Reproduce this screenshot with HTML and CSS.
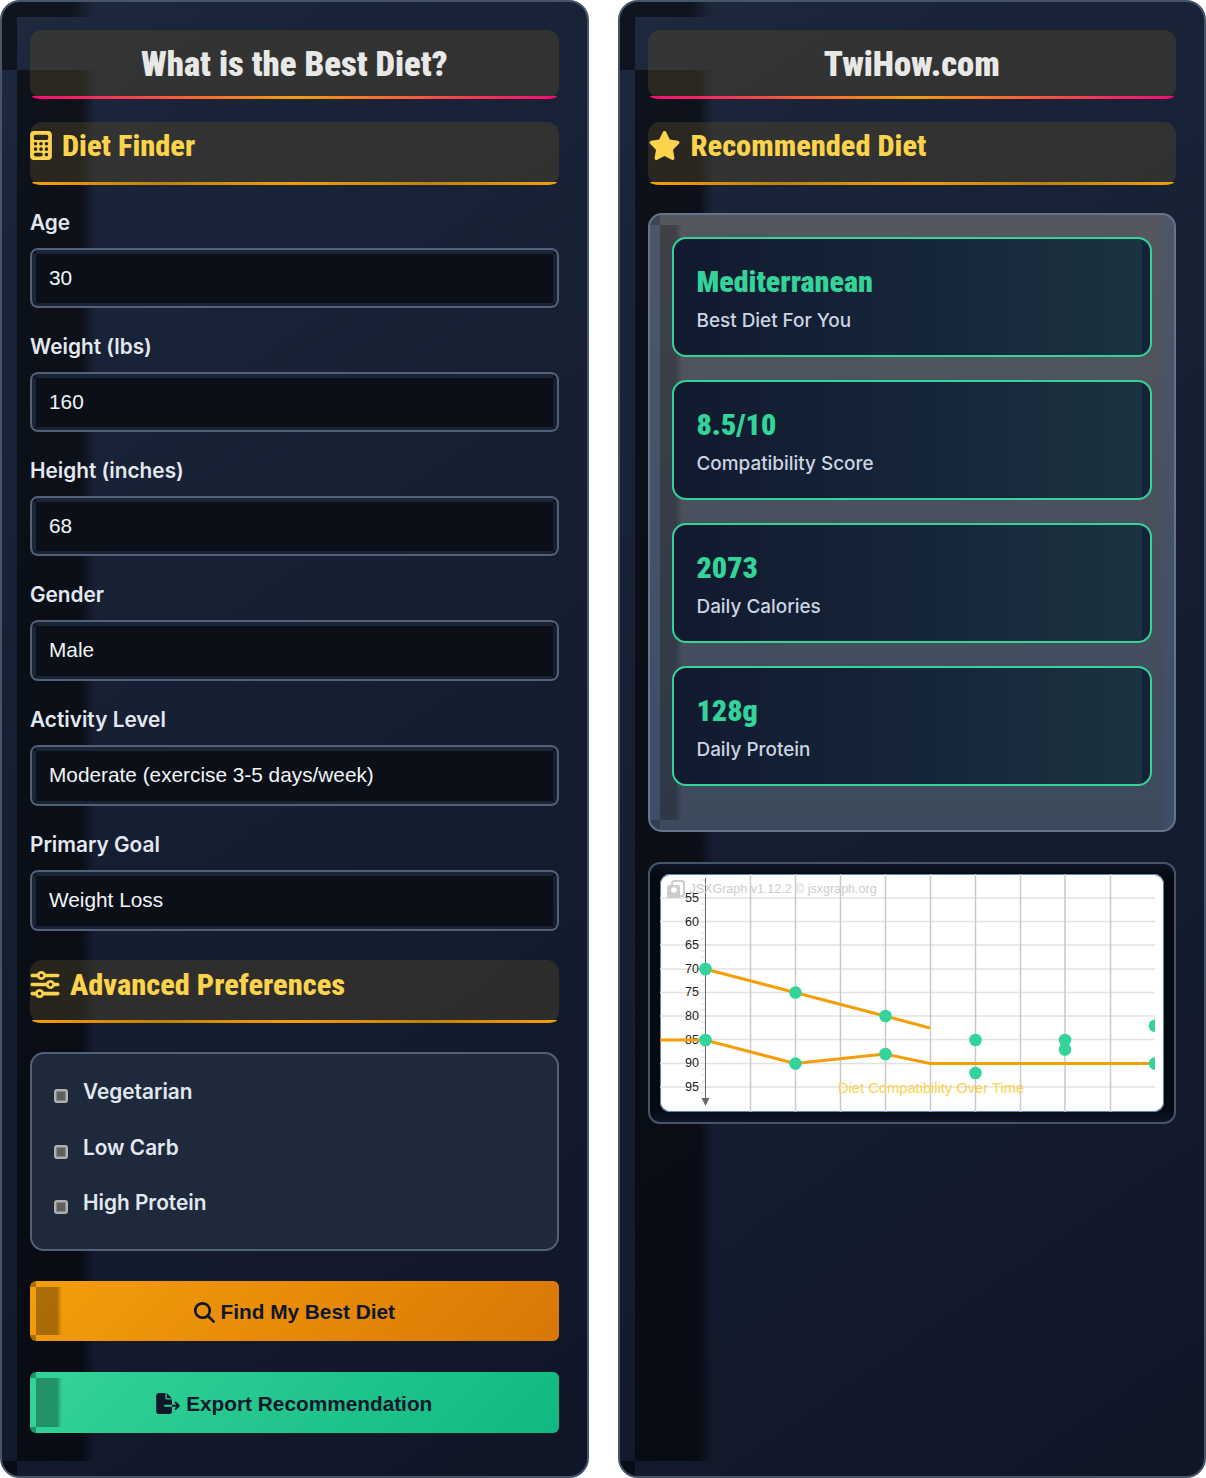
FILE: index.html
```html
<!DOCTYPE html>
<html lang="en">
<head>
<meta charset="utf-8">
<title>What is the Best Diet?</title>
<link rel="stylesheet" href="styles.css">
</head>
<body>
<main class="layout">
  <section class="panel">
    <h1 class="title">What is the Best Diet?</h1>
    <h2 class="head">
      <svg class="ico ico-calc" viewBox="0 0 384 512"><path d="M64 0C28.7 0 0 28.7 0 64V448c0 35.3 28.7 64 64 64H320c35.3 0 64-28.7 64-64V64c0-35.3-28.7-64-64-64H64zM96 64H288c17.7 0 32 14.3 32 32v32c0 17.7-14.3 32-32 32H96c-17.7 0-32-14.3-32-32V96c0-17.7 14.3-32 32-32zm32 160a32 32 0 1 1 -64 0 32 32 0 1 1 64 0zM96 352a32 32 0 1 1 0-64 32 32 0 1 1 0 64zM64 416c0-17.7 14.3-32 32-32h96c17.7 0 32 14.3 32 32s-14.3 32-32 32H96c-17.7 0-32-14.3-32-32zM192 256a32 32 0 1 1 0-64 32 32 0 1 1 0 64zm32 64a32 32 0 1 1 -64 0 32 32 0 1 1 64 0zm64-64a32 32 0 1 1 0-64 32 32 0 1 1 0 64zm32 64a32 32 0 1 1 -64 0 32 32 0 1 1 64 0zM288 448a32 32 0 1 1 0-64 32 32 0 1 1 0 64z"/></svg>
      <span>Diet Finder</span>
    </h2>
    <div class="field"><label class="label" for="age">Age</label><input class="control" id="age" value="30"></div>
    <div class="field"><label class="label" for="weight">Weight (lbs)</label><input class="control" id="weight" value="160"></div>
    <div class="field"><label class="label" for="height">Height (inches)</label><input class="control" id="height" value="68"></div>
    <div class="field"><label class="label" for="gender">Gender</label><select class="control control-select" id="gender"><option>Male</option></select></div>
    <div class="field"><label class="label" for="activity">Activity Level</label><select class="control control-select" id="activity"><option>Moderate (exercise 3-5 days/week)</option></select></div>
    <div class="field field-last"><label class="label" for="goal">Primary Goal</label><select class="control control-select" id="goal"><option>Weight Loss</option></select></div>
    <h2 class="head head-adv">
      <svg class="ico ico-sliders" viewBox="0 0 512 512"><path d="M0 416c0 17.7 14.3 32 32 32l54.7 0c12.3 28.3 40.5 48 73.3 48s61-19.7 73.3-48L480 448c17.7 0 32-14.3 32-32s-14.3-32-32-32l-246.7 0c-12.3-28.3-40.5-48-73.3-48s-61 19.7-73.3 48L32 384c-17.7 0-32 14.3-32 32zm128 0a32 32 0 1 1 64 0 32 32 0 1 1 -64 0zM320 256a32 32 0 1 1 64 0 32 32 0 1 1 -64 0zm32-80c-32.8 0-61 19.7-73.3 48L32 224c-17.7 0-32 14.3-32 32s14.3 32 32 32l246.7 0c12.3 28.3 40.5 48 73.3 48s61-19.7 73.3-48l54.7 0c17.7 0 32-14.3 32-32s-14.3-32-32-32l-54.7 0c-12.3-28.3-40.5-48-73.3-48zM192 128a32 32 0 1 1 0-64 32 32 0 1 1 0 64zm73.3-64C253 35.7 224.8 16 192 16s-61 19.7-73.3 48L32 64C14.3 64 0 78.3 0 96s14.3 32 32 32l86.7 0c12.3 28.3 40.5 48 73.3 48s61-19.7 73.3-48L480 128c17.7 0 32-14.3 32-32s-14.3-32-32-32L265.3 64z"/></svg>
      <span>Advanced Preferences</span>
    </h2>
    <div class="prefs">
      <label class="pref"><input type="checkbox" class="check"><span>Vegetarian</span></label>
      <label class="pref"><input type="checkbox" class="check"><span>Low Carb</span></label>
      <label class="pref"><input type="checkbox" class="check"><span>High Protein</span></label>
    </div>
    <button class="btn btn-find" type="button">
      <svg class="btn-ico btn-ico-search" viewBox="0 0 512 512"><path d="M416 208c0 45.9-14.9 88.3-40 122.7L502.6 457.4c12.5 12.5 12.5 32.8 0 45.3s-32.8 12.5-45.3 0L330.7 376c-34.4 25.2-76.8 40-122.7 40C93.1 416 0 322.9 0 208S93.1 0 208 0S416 93.1 416 208zM208 352a144 144 0 1 0 0-288 144 144 0 1 0 0 288z"/></svg>
      Find My Best Diet
    </button>
    <button class="btn btn-export" type="button">
      <svg class="btn-ico btn-ico-export" viewBox="0 0 576 512"><path d="M0 64C0 28.7 28.7 0 64 0H224V128c0 17.7 14.3 32 32 32H384V288H216c-13.3 0-24 10.7-24 24s10.7 24 24 24H384V448c0 35.3-28.7 64-64 64H64c-35.3 0-64-28.7-64-64V64zM384 336V288H494.1l-39-39c-9.4-9.4-9.4-24.6 0-33.9s24.6-9.4 33.9 0l80 80c9.4 9.4 9.4 24.6 0 33.9l-80 80c-9.4 9.4-24.6 9.4-33.9 0s-9.4-24.6 0-33.9l39-39H384zm0-208H256V0L384 128z"/></svg>
      Export Recommendation
    </button>
  </section>

  <section class="panel">
    <h1 class="title">TwiHow.com</h1>
    <h2 class="head head-rec">
      <svg class="ico ico-star" viewBox="0 0 576 512"><path d="M316.9 18C311.6 7 300.4 0 288.1 0s-23.4 7-28.8 18L195 150.3 51.4 171.5c-12 1.8-22 10.2-25.7 21.7s-.7 24.2 7.9 32.7L137.8 329 113.2 474.7c-2 12 3 24.2 12.9 31.3s23 8 33.8 2.3l128.3-68.5 128.3 68.5c10.8 5.7 23.9 4.9 33.8-2.3s14.9-19.3 12.9-31.3L438.5 329 542.7 225.9c8.6-8.5 11.7-21.2 7.9-32.7s-13.7-19.9-25.7-21.7L381.2 150.3 316.9 18z"/></svg>
      <span>Recommended Diet</span>
    </h2>
    <div class="metrics">
      <div class="metric"><div class="metric-value">Mediterranean</div><div class="metric-label">Best Diet For You</div></div>
      <div class="metric"><div class="metric-value">8.5/10</div><div class="metric-label">Compatibility Score</div></div>
      <div class="metric"><div class="metric-value">2073</div><div class="metric-label">Daily Calories</div></div>
      <div class="metric"><div class="metric-value">128g</div><div class="metric-label">Daily Protein</div></div>
    </div>
    <div class="chart-wrap">
      <div class="chart">
        <svg class="chart-svg" viewBox="0 0 504 238" width="504" height="238">
          <g class="grid-h">
            <line x1="0" x2="495" y1="24" y2="24"/><line x1="0" x2="495" y1="47.5" y2="47.5"/><line x1="0" x2="495" y1="71" y2="71"/><line x1="0" x2="495" y1="95" y2="95"/><line x1="0" x2="495" y1="118.5" y2="118.5"/><line x1="0" x2="495" y1="142" y2="142"/><line x1="0" x2="495" y1="165.5" y2="165.5"/><line x1="0" x2="495" y1="189.5" y2="189.5"/><line x1="0" x2="495" y1="213" y2="213"/>
          </g>
          <g class="grid-v">
            <line x1="90.5" x2="90.5" y1="0" y2="238"/><line x1="135.5" x2="135.5" y1="0" y2="238"/><line x1="180.5" x2="180.5" y1="0" y2="238"/><line x1="225.5" x2="225.5" y1="0" y2="238"/><line x1="270.5" x2="270.5" y1="0" y2="238"/><line x1="315.5" x2="315.5" y1="0" y2="238"/><line x1="360.5" x2="360.5" y1="0" y2="238"/><line x1="405" x2="405" y1="0" y2="238"/><line x1="450.5" x2="450.5" y1="0" y2="238"/>
          </g>
          <path class="ticks" d="M41 6h4M41 12h4M41 18h4M41 30h4M41 36h4M41 41h4M41 53h4M41 59h4M41 65h4M41 77h4M41 83h4M41 89h4M41 101h4M41 107h4M41 112h4M41 124h4M41 130h4M41 136h4M41 148h4M41 154h4M41 160h4M41 172h4M41 177h4M41 183h4M41 195h4M41 201h4M41 207h4M41 219h4"/>
          <line class="axis" x1="45.5" x2="45.5" y1="4" y2="226"/>
          <path class="arrow" d="M41.5 224h8l-4 8z"/>
          <g class="brand">
            <rect class="brand-back" x="12" y="7" width="12" height="15" rx="2.5"/>
            <rect class="brand-front" x="7" y="11" width="13" height="13" rx="2"/>
            <circle class="brand-hole" cx="14" cy="16" r="2.8"/>
          </g>
          <text class="brand-text" x="29.500" y="19">JSXGraph v1.12.2 © jsxgraph.org</text>
          <g class="tick-labels">
            <text x="25" y="28">55</text><text x="25" y="52">60</text><text x="25" y="75">65</text><text x="25" y="99">70</text><text x="25" y="122">75</text><text x="25" y="146">80</text><text x="25" y="170">85</text><text x="25" y="193">90</text><text x="25" y="217">95</text>
          </g>
          <path class="series" d="M45 95L135 118.5L225 142L270 154"/>
          <path class="series" d="M0 166H45L135 189.5L225 180L270 189.5H495"/>
          <text class="chart-title" x="178" y="219">Diet Compatibility Over Time</text>
          <g class="dots">
            <circle cx="45.5" cy="95" r="6.3"/><circle cx="135.5" cy="118.5" r="6.3"/><circle cx="225.5" cy="142" r="6.3"/><circle cx="315.5" cy="166" r="6.3"/><circle cx="405" cy="166" r="6.3"/><path d="M495 145.5a6.3 6.3 0 0 0 0 12.600z"/>
            <circle cx="45.5" cy="166" r="6.3"/><circle cx="135.5" cy="189.5" r="6.3"/><circle cx="225.5" cy="180" r="6.3"/><circle cx="315.5" cy="199" r="6.3"/><circle cx="405" cy="175.500" r="6.3"/><path d="M495 183.200a6.300 6.300 0 0 0 0 12.600z"/>
          </g>
        </svg>
      </div>
    </div>
  </section>
</main>
</body>
</html>
```
FILE: styles.css
```css
* { box-sizing: border-box; }
html, body { margin: 0; padding: 0; background: #fff; }
body { font-family: Inter, "Liberation Sans", sans-serif; }
.layout {
  display: grid;
  grid-template-columns: 1fr 1fr;
  column-gap: 29px;
  width: 1206px;
  height: 1478px;
}
.panel {
  border: 2px solid #475569;
  border-radius: 20px;
  padding: 28px 28px 0;
  background-color: #1e293b;
  background-origin: padding-box;
  background-clip: border-box;
  background-repeat: no-repeat;
  background-image:
    linear-gradient(rgba(0,0,0,.5), rgba(0,0,0,.5)),
    linear-gradient(90deg, rgba(0,0,0,.5), rgba(0,0,0,.5) 70%, transparent),
    linear-gradient(90deg, rgba(0,0,0,.55), rgba(0,0,0,.55) 82%, transparent),
    linear-gradient(rgba(0,0,0,.5), rgba(0,0,0,.5)),
    linear-gradient(145deg, #1e2a3f, #1a2438 12%, #131b2e 70%, #0f1626);
  background-size:
    15px 68px,
    78px 15px,
    78px calc(100% - 83px),
    15px 15px,
    100% 100%;
  background-position:
    0 0,
    15px 0,
    15px 68px,
    0 100%,
    0 0;
}
.title {
  position: relative;
  margin: 0 0 24px;
  height: 68px;
  border-radius: 12px;
  background: rgba(90,75,43,.38);
  color: #e8e8e6;
  font-family: Roboto, sans-serif;
  font-stretch: condensed;
  font-weight: 900;
  font-size: 34.7px;
  line-height: 68px;
  text-align: center;
}
.title::after {
  content: "";
  position: absolute;
  left: 2px;
  right: 2px;
  bottom: -1px;
  height: 3px;
  border-radius: 0 0 10px 10px / 0 0 3px 3px;
  background: linear-gradient(90deg, #ff0a78, #f59e0b 50%, #ff0a78);
}
.head {
  position: relative;
  display: flex;
  align-items: center;
  gap: 10px;
  height: 63px;
  margin: 0 0 23px;
  padding-bottom: 17px;
  padding-top: 1px;
  border-radius: 12px;
  background: rgba(90,75,43,.38);
  color: #fcd34d;
  font-family: Roboto, sans-serif;
  font-stretch: condensed;
  font-weight: 800;
  font-size: 30.4px;
  line-height: 36px;
}
.head::after {
  content: "";
  position: absolute;
  left: 2px;
  right: 2px;
  bottom: 0;
  height: 3px;
  border-radius: 0 0 10px 10px / 0 0 3px 3px;
  background: linear-gradient(90deg, #f59e0b, #c2810c 25%, #f59e0b 50%, #c2810c 75%, #f59e0b);
}
.head-adv { margin-bottom: 29px; padding-bottom: 16px; padding-top: 2px; }
.head-rec { margin-bottom: 29px; }
.ico { height: 29px; fill: #fcd34d; flex: none; }
.ico-calc { width: 22px; }
.ico-star { width: 33px; }
.ico-sliders { width: 30px; }
.field { margin-bottom: 24px; }
.field-last { margin-bottom: 29px; }
.label {
  display: block;
  height: 30px;
  margin-bottom: 10px;
  color: #e2e8f0;
  font-size: 20.8px;
  font-weight: 600;
  line-height: 30px;
}
.control {
  display: block;
  width: 100%;
  height: 60px;
  margin: 0;
  padding: 0 17px;
  border: 2px solid #536176;
  border-radius: 8px;
  outline: 0;
  color: #f1f5f9;
  font-family: "Liberation Sans", Arial, sans-serif;
  font-size: 20.8px;
  appearance: none;
  background-color: #0b0f17;
  background-origin: padding-box;
  background-repeat: no-repeat;
  background-image:
    linear-gradient(#1b2538, #1b2538),
    linear-gradient(#1a2336, #1a2336),
    linear-gradient(#1b2538, #1b2538),
    linear-gradient(#172033, #172033);
  background-size:
    calc(100% - 8px) 4px,
    calc(100% - 8px) 3px,
    4px calc(100% - 7px),
    4px calc(100% - 7px);
  background-position:
    4px 0,
    4px 100%,
    0 4px,
    100% 4px;
}
.control-select { height: 61px; padding-bottom: 2px; }
.prefs {
  height: 199px;
  margin-bottom: 30px;
  padding: 18.5px 22px;
  border: 2px solid #536176;
  border-radius: 14px;
  background: #1e293b;
}
.pref {
  display: flex;
  gap: 15px;
  align-items: center;
  height: 40px;
  margin-bottom: 15.5px;
  color: #e2e8f0;
  font-size: 20.8px;
  font-weight: 600;
}
.pref span { position: relative; top: -1px; }
.check {
  appearance: none;
  flex: none;
  width: 14px;
  height: 14px;
  margin: 7px 0 0;
  border: 2px solid #b0b0b0;
  border-radius: 3px;
  background: #5f5f5f;
  box-shadow: inset 0 0 0 1px #8a8a8a;
}
.btn {
  display: flex;
  align-items: center;
  justify-content: center;
  gap: 6px;
  width: 100%;
  height: 60px;
  margin: 0 0 31px;
  padding: 2px 0 0;
  border: 0;
  border-radius: 6px;
  color: #0f172a;
  font-family: "Liberation Sans", Arial, sans-serif;
  font-size: 20.8px;
  font-weight: 700;
  background-repeat: no-repeat;
}
.btn-export { height: 61px; }
.btn-find {
  background-image:
    linear-gradient(rgba(0,0,0,.3), rgba(0,0,0,.3)),
    linear-gradient(rgba(0,0,0,.3), rgba(0,0,0,.3)),
    linear-gradient(90deg, rgba(0,0,0,.3), rgba(0,0,0,.3) 80%, transparent),
    linear-gradient(135deg, #f59e0b, #d97706);
  background-size: 6px 6px, 6px 6px, 26px calc(100% - 12px), 100% 100%;
  background-position: 0 0, 0 100%, 6px 6px, 0 0;
}
.btn-export {
  background-image:
    linear-gradient(rgba(0,0,0,.3), rgba(0,0,0,.3)),
    linear-gradient(rgba(0,0,0,.3), rgba(0,0,0,.3)),
    linear-gradient(90deg, rgba(0,0,0,.3), rgba(0,0,0,.3) 80%, transparent),
    linear-gradient(135deg, #34d399, #10b981);
  background-size: 6px 6px, 6px 6px, 26px calc(100% - 12px), 100% 100%;
  background-position: 0 0, 0 100%, 6px 6px, 0 0;
}
.btn-ico { fill: #0f172a; height: 21px; flex: none; }
.btn-ico-search { width: 21px; }
.btn-ico-export { width: 24px; }
.metrics {
  height: 619px;
  margin-top: -1px;
  margin-bottom: 30px;
  padding: 22px 22px 20px;
  border: 2px solid #64748b;
  border-radius: 14px;
  background-color: #3d495c;
  background-origin: padding-box;
  background-repeat: no-repeat;
  background-image:
    linear-gradient(rgba(0,0,0,.2), rgba(0,0,0,.2)),
    linear-gradient(rgba(0,0,0,.2), rgba(0,0,0,.2)),
    linear-gradient(90deg, rgba(0,0,0,.25), rgba(0,0,0,.25) 70%, transparent),
    linear-gradient(rgba(60,85,125,.3), rgba(60,85,125,.3)),
    linear-gradient(rgba(60,85,125,.3), rgba(60,85,125,.3)),
    linear-gradient(#54575e, #3d4a5d);
  background-size:
    10px 10px,
    10px 10px,
    22px calc(100% - 20px),
    10px 100%,
    10px 100%,
    100% 100%;
  background-position:
    0 0,
    0 100%,
    10px 10px,
    100% 0,
    0 0,
    0 0;
}
.metric {
  height: 120px;
  margin-bottom: 23px;
  padding: 25px 23px 0;
  border: 2px solid #34d399;
  border-radius: 14px;
  background-color: #111a2e;
  background-origin: padding-box;
  background-repeat: no-repeat;
  background-image:
    linear-gradient(#15233a, #15233a),
    linear-gradient(90deg, #111a2e, #16263a 55%, #1c3340);
  background-size: 8px 100%, 100% 100%;
  background-position: 100% 0, 0 0;
}
.metric-value {
  color: #34d399;
  font-family: Roboto, sans-serif;
  font-stretch: condensed;
  font-weight: 900;
  font-size: 30px;
  line-height: 36px;
}
.metric-label {
  margin-top: 6px;
  color: #cbd5e1;
  font-size: 18.9px;
  font-weight: 500;
  line-height: 30px;
}
.chart-wrap {
  height: 262px;
  padding: 10px;
  border: 2px solid #475569;
  border-radius: 12px;
  background: linear-gradient(#0d1628, #050910 5%, #050910 95%, #0d1628);
}
.chart {
  width: 504px;
  height: 238px;
  border-radius: 10px;
  background: #fff;
  box-shadow: 0 0 0 1px #5b83b3 inset;
  overflow: hidden;
}
.chart-svg { display: block; }
.grid-h line { stroke: #e2e2e2; stroke-width: 1.5; }
.grid-v line { stroke: #c9c9c9; stroke-width: 1.5; }
.ticks { stroke: #dcdcdc; stroke-width: 1; fill: none; }
.axis { stroke: #666; stroke-width: 1; }
.arrow { fill: #666; }
.brand-back { fill: none; stroke: #ccc; stroke-width: 2; }
.brand-front { fill: #ccc; }
.brand-hole { fill: #fff; }
.brand-text {
  fill: #ccc;
  font-family: "Liberation Sans", Arial, sans-serif;
  font-size: 12.5px;
}
.tick-labels text {
  fill: #222;
  font-family: "Liberation Sans", Arial, sans-serif;
  font-size: 12.5px;
}
.series { fill: none; stroke: #f59e0b; stroke-width: 3; }
.chart-title {
  fill: #fcd34d;
  font-family: "Liberation Sans", Arial, sans-serif;
  font-size: 14.7px;
}
.dots { fill: #34d399; }
```
